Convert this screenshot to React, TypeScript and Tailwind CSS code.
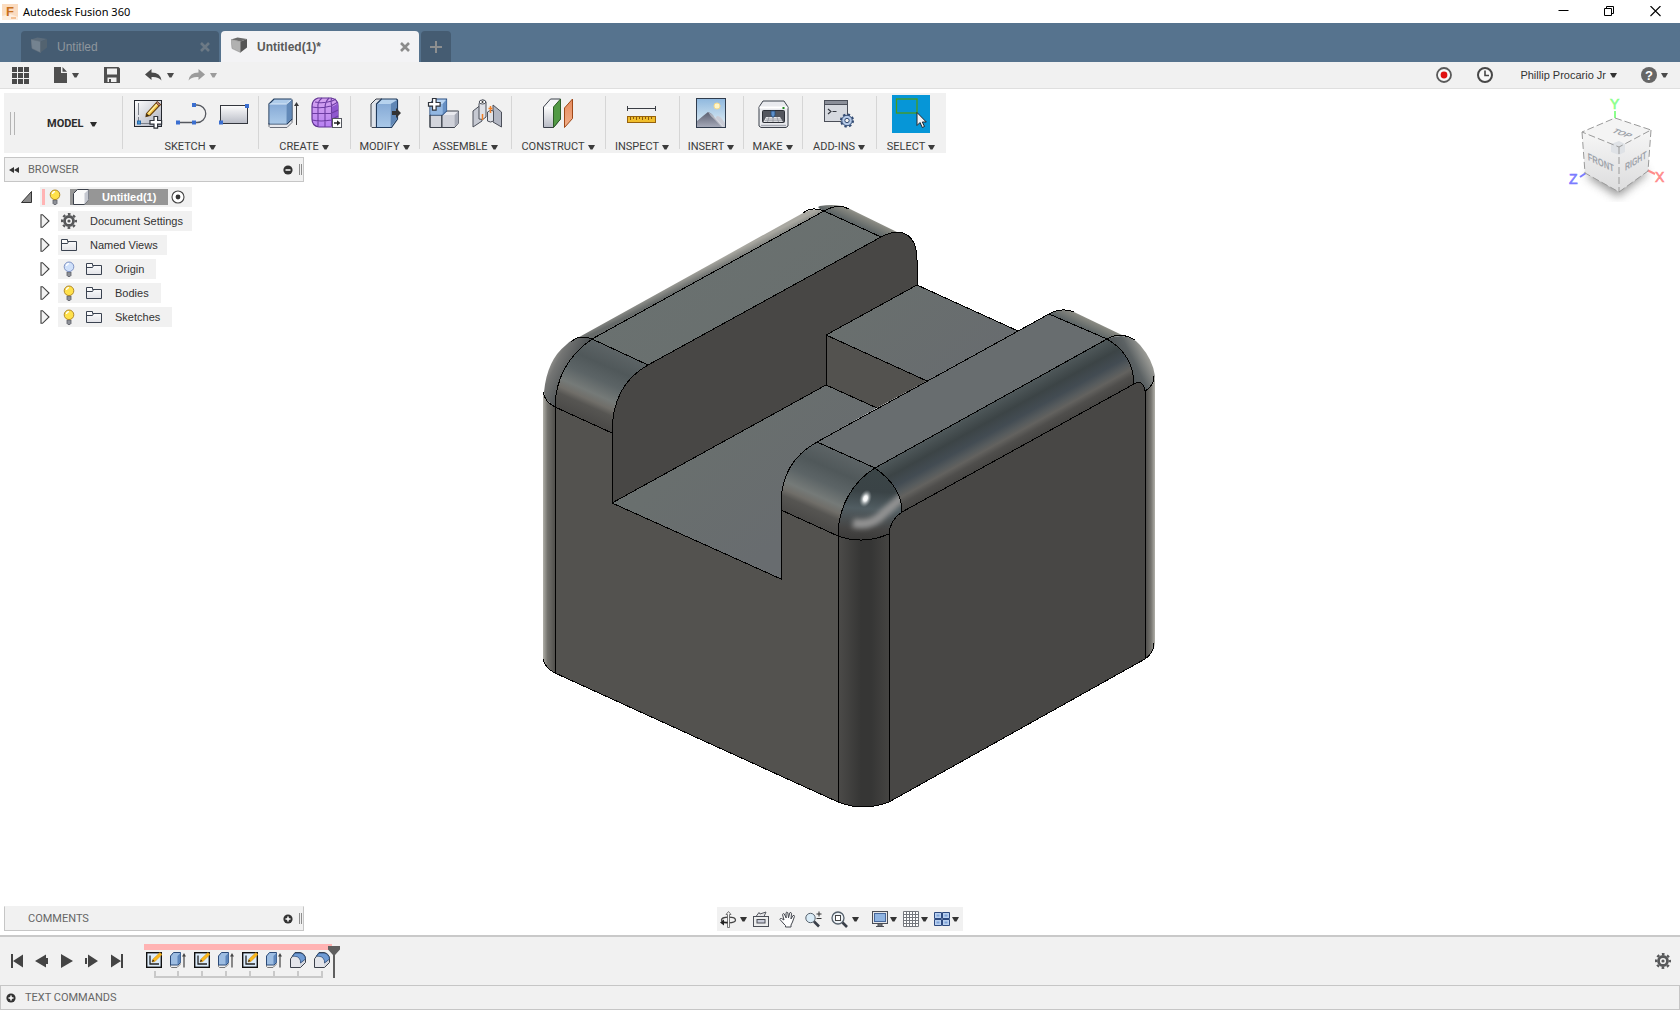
import React from "react";
import clsx from "clsx";

type IconProps = { className?: string };

const Caret = ({ className }: IconProps) => (
    <svg viewBox="0 0 7 5" className={clsx("h-[5px] w-[7px] shrink-0", className)} fill="currentColor">
        <path d="M0 0h7L4.5 4.5h-2z" />
    </svg>
);

const Svg = ({ size = 38, className, children }: { size?: number; className?: string; children: React.ReactNode }) => (
    <svg width={size} height={size} viewBox={`0 0 ${size} ${size}`} className={clsx("shrink-0", className)} fill="none">
        {children}
    </svg>
);

/* ---------- shared gradients ---------- */

const Defs = () => (
    <svg className="absolute h-0 w-0" aria-hidden="true">
        <defs>
            <linearGradient id="gray" x1="0" y1="0" x2="0" y2="1">
                <stop offset="0" stopColor="#fdfdfd" />
                <stop offset="1" stopColor="#b9bcc6" />
            </linearGradient>
            <linearGradient id="paper" x1="0" y1="0" x2="0" y2="1">
                <stop offset="0" stopColor="#ffffff" />
                <stop offset="1" stopColor="#e2e3e8" />
            </linearGradient>
            <linearGradient id="grayDiag" x1="0" y1="0" x2="1" y2="1">
                <stop offset="0" stopColor="#ffffff" />
                <stop offset="1" stopColor="#a9adba" />
            </linearGradient>
            <linearGradient id="blue" x1="0" y1="0" x2="0" y2="1">
                <stop offset="0" stopColor="#86aad6" />
                <stop offset="1" stopColor="#a9c8e8" />
            </linearGradient>
            <linearGradient id="purple" x1="0" y1="0" x2="0" y2="1">
                <stop offset="0" stopColor="#d6a5f0" />
                <stop offset="1" stopColor="#b781f2" />
            </linearGradient>
            <linearGradient id="sky" x1="0" y1="0" x2="0" y2="1">
                <stop offset="0" stopColor="#8fb8de" />
                <stop offset="1" stopColor="#e4f1f6" />
            </linearGradient>
            <linearGradient id="mount" x1="0" y1="0" x2="0" y2="1">
                <stop offset="0" stopColor="#5b5f70" />
                <stop offset="1" stopColor="#a5a9b8" />
            </linearGradient>
            <linearGradient id="orange" x1="0" y1="0" x2="0" y2="1">
                <stop offset="0" stopColor="#e58a5d" />
                <stop offset="1" stopColor="#f2b08a" />
            </linearGradient>
        </defs>
    </svg>
);

/* ---------- ribbon icons ---------- */

const PlusBadge = ({ x, y }: { x: number; y: number }) => (
    <path
        transform={`translate(${x} ${y})`}
        d="M4 0h3.6v4h4v3.6h-4v4H4v-4H0V4h4z"
        fill="#fff"
        stroke="#2f333b"
        strokeWidth="1.2"
    />
);

const SketchIcon = () => (
    <Svg>
        <rect x="6.5" y="5.5" width="27" height="26" fill="url(#grayDiag)" stroke="#24272e" />
        <path d="M10.5 8v19M12 28.5h12" stroke="#7b8089" strokeDasharray="12 2" />
        <rect x="9.5" y="26" width="3" height="3" fill="#4d9ad8" stroke="#2467a8" />
        <path d="M18.5 18.5L29 7l3.500 2.500-10.500 11-4 1z" fill="#f6c445" stroke="#6b4410" strokeWidth="1.1" />
        <path d="M20.5 18.5l10-11" stroke="#fdf0a8" strokeWidth="1.2" />
        <path d="M28 8l3 3 1.500-1.500-3-3z" fill="#b77d67" stroke="#59301d" strokeWidth=".7" />
        <path d="M18.5 18.5l-.5 3 3.500-.8z" fill="#3b2a12" />
        <PlusBadge x={22} y={21.5} />
    </Svg>
);

const LineIcon = () => (
    <Svg>
        <path d="M7 27.5h16M23 10h3a8.700 8.700 0 0 1 0 17.500h-3" stroke="#55585f" strokeWidth="1.3" />
        <path d="M5 25.5h4v4H5zM21 25.5h4v4h-4zM21 8h4v4h-4z" fill="#3b6fd0" />
    </Svg>
);

const RectIcon = () => (
    <Svg>
        <rect x="6.5" y="10.5" width="27" height="18" fill="url(#gray)" stroke="#33363d" />
        <path d="M5 25.5h4v4H5zM31 9h4v4h-4z" fill="#3b6fd0" />
    </Svg>
);

const ExtrudeIcon = () => (
    <Svg>
        <path d="M5 28v3.500l1 1h17l5-5V24z" fill="#e8e9ee" stroke="#6a6e78" />
        <path d="M5 9l5-5h17l1 1v19l-5 5H5z" fill="#aecbea" stroke="#1f3a5c" strokeWidth="1.2" />
        <path d="M5.6 9h17v19.500h-17z" fill="url(#blue)" />
        <path d="M22.5 9v19.500l5-5V5z" fill="#6289b8" />
        <path d="M5.5 9h17l5-4.500" stroke="#d9e8f8" />
        <path d="M32.5 30V9" stroke="#3a3a3a" />
        <path d="M30 11l2.500-4 2.500 4z" fill="#3a3a3a" />
    </Svg>
);

const FormIcon = () => (
    <Svg>
        <path d="M11 3h13q7 1 7 8v11q0 6-6 10H12q-7-1-7-8V11q0-6 6-8z" fill="url(#purple)" stroke="#5f3391" strokeWidth="1.2" />
        <path d="M24 12q6-2 7-5v15q0 6-6 10z" fill="#8e57ce" />
        <path
            d="M5 12q9 2 19-1l7-4M5 18.5h19l7-3.500M5 25q9 2 19 0l7-4M11 13v18M18 13v19M24.5 11v20M8 7q8 2 17-1l4-2M11 13q-1-6 4-10M18 13q0-6 4-10M25 11q-2-5 0-8"
            stroke="#6d3da3"
            strokeWidth="1.1"
        />
        <rect x="25.5" y="23.5" width="9" height="9" fill="#fff" stroke="#54575e" />
        <path d="M27 28h4" stroke="#222" strokeWidth="1.5" />
        <path d="M30 25.2l3.500 2.800-3.500 2.800z" fill="#222" />
    </Svg>
);

const ModifyIcon = () => (
    <Svg>
        <path d="M5 9l5-5h6l-5 5v23.500H6l-1-1z" fill="#dfe3ea" stroke="#3b404a" />
        <path d="M10.5 9l5-5h15l1 1v19l-6 8.500h-15z" fill="#b6d2ee" stroke="#1f3a5c" strokeWidth="1.2" />
        <path d="M11 9h13v23H11z" fill="url(#blue)" />
        <path d="M24.5 9v23l6.500-8V5z" fill="#5f86b5" />
        <path d="M26 16h4v-3l5 5-5 5v-3h-4z" fill="#333" />
    </Svg>
);

const AssembleIcon = () => (
    <Svg>
        <path d="M5 20l4-4M5 20v12.500h12V20z" fill="#d3d5dc" stroke="#3b404a" />
        <path d="M17 20l4-4h12.500v12l-4 4.500H17z" fill="#e8e9ee" stroke="#3b404a" />
        <path d="M17 20h12.500v12H17z" fill="#d0d2da" />
        <path d="M29.5 20v12l4-4V16z" fill="#a6aab6" />
        <path d="M5 9l4-5h12.500v12l-4 4H5z" fill="#b9d5f3" stroke="#2b5184" strokeWidth="1.2" />
        <path d="M5.5 9h12v10.500h-12z" fill="#92b7e2" />
        <path d="M17.5 9v10.500l4-4V4.500z" fill="#6690c4" />
        <path d="M5 20v12.500h24.500M17 20v12.500" stroke="#3b404a" />
        <PlusBadge x={3.5} y={3.5} />
    </Svg>
);

const JointIcon = () => (
    <Svg>
        <path d="M5 16l9-7v17l-9 6z" fill="#c6c9d2" stroke="#4b4f59" />
        <path d="M11 9q0-3 3.500-4 3 0 3.500 2v15q-3 4-7 2z" fill="#dfe1e7" stroke="#4b4f59" />
        <ellipse cx="14.5" cy="7" rx="3.3" ry="2" fill="#fff" stroke="#4b4f59" />
        <circle cx="14.5" cy="7" r="1" fill="#333" />
        <path d="M14.5 19v6" stroke="#f08028" strokeWidth="1.5" />
        <path d="M25 10l8.500 7v15l-8.500-5z" fill="#b3b7c3" stroke="#4b4f59" />
        <path d="M19.5 17q3-3 6-1v10q-3 2-6 0z" fill="#dfe1e7" stroke="#4b4f59" />
        <path d="M22.5 11v7M20.5 13.5h4" stroke="#f08028" strokeWidth="1.5" />
    </Svg>
);

const ConstructIcon = () => (
    <Svg>
        <path d="M4.5 12l7-8h10v20l-7 8.500h-10z" fill="#f4f5f7" stroke="#3b404a" />
        <path d="M5 12h9.500v20H5z" fill="url(#gray)" />
        <path d="M14.5 12l7-8v20l-7 8.500z" fill="#529a45" stroke="#2d5d26" />
        <path d="M25.5 13l8-9v19.500l-8 9z" fill="url(#orange)" stroke="#a04818" />
    </Svg>
);

const InspectIcon = () => (
    <Svg>
        <path d="M4.5 11v5M32.5 11v5M5 13.5h27" stroke="#3a3d44" />
        <rect x="4.5" y="21.5" width="28" height="6" fill="#f0be2c" stroke="#97620c" />
        <path d="M7.5 22v3M10.5 22v2M13.5 22v3M16.5 22v2M19.5 22v3M22.5 22v2M25.5 22v3M28.5 22v2" stroke="#8a5a0a" />
    </Svg>
);

const InsertIcon = () => (
    <Svg>
        <rect x="4.5" y="3.5" width="29" height="29" fill="url(#sky)" />
        <circle cx="25" cy="11" r="3" fill="#fff6c8" stroke="#f6d98a" />
        <path d="M16 32l9-11q3-1 8 7v4z" fill="#c9ccd6" />
        <path d="M5 26l6-5 5-4q4 1 7 6l8 9H5z" fill="url(#mount)" />
        <path d="M16 17q2 4 7 8l7 7h2L22 21q-3-3-6-4z" fill="#e8e9ef" opacity=".55" />
        <rect x="4.5" y="3.5" width="29" height="29" stroke="#2f3b4c" />
    </Svg>
);

const MakeIcon = () => (
    <Svg>
        <path d="M5 12l4-6h21l4 6v19l-2 1.500H7L5 31z" fill="#e9eaee" stroke="#3b404a" />
        <path d="M5.5 12.5h28" stroke="#fff" strokeWidth="2" />
        <rect x="8.5" y="15.5" width="22" height="12" rx="1" fill="#53565e" stroke="#2c2f36" />
        <path d="M12 22h14l3 5H9.5z" fill="#e6e7ea" />
        <path d="M12 24h15M11 25.7h17M15 22l-1.500 5M19 22v5M23 22l1.500 5" stroke="#8b8e97" strokeWidth=".7" />
        <path d="M17 16h4v4l-1 2h-2l-1-2z" fill="#5d90cb" stroke="#274b78" strokeWidth=".8" />
        <rect x="28.5" y="12" width="2" height="2" fill="#1f8a1f" />
        <path d="M7 30.5h25" stroke="#a6a9b3" strokeWidth="1.5" />
    </Svg>
);

const AddInsIcon = () => (
    <Svg>
        <rect x="4.5" y="5.5" width="23" height="21" fill="#d6d9df" stroke="#4a4e58" />
        <rect x="5" y="6" width="22" height="3.5" fill="#8b8f99" />
        <path d="M4.5 9.5h23" stroke="#4a4e58" />
        <path d="M8 14l3 2.500L8 19M12.5 16.5h4" stroke="#33363d" strokeWidth="1.1" />
        <circle cx="27" cy="25.5" r="5.8" fill="#a8bfe0" stroke="#334b72" strokeWidth="2.5" strokeDasharray="2.3 2.25" />
        <circle cx="27" cy="25.5" r="5.2" fill="#b7cbe8" stroke="#334b72" strokeWidth=".9" />
        <circle cx="27" cy="25.5" r="2.2" fill="#f1f1f1" stroke="#334b72" />
    </Svg>
);

const SelectIcon = () => (
    <Svg className="bg-[#0696d7]">
        <rect x="4.5" y="4" width="20.5" height="14" stroke="#4a9a1c" strokeWidth="1.3" />
        <path d="M25 17.5v13l3-3 2.300 5 2.200-1-2.200-4.500h4z" fill="#f1f2f5" stroke="#20262e" />
    </Svg>
);

/* ---------- small icons ---------- */

const Gear = ({ className }: IconProps) => (
    <svg viewBox="0 0 16 16" className={clsx("h-4 w-4 shrink-0", className)} fill="none" stroke="#57585a">
        <circle cx="8" cy="8" r="4.5" strokeWidth="2.8" />
        <circle cx="8" cy="8" r="6.9" strokeWidth="2.2" strokeDasharray="2.7 2.719" strokeDashoffset="1.35" />
        <circle cx="8" cy="8" r="1.6" fill="#57585a" stroke="none" />
    </svg>
);

const Bulb = ({ off }: { off?: boolean }) => (
    <svg viewBox="0 0 12 16" className="h-4 w-3 shrink-0" fill="none">
        <path d="M4 11h4v3.500l-1 1H5l-1-1z" fill="#8d9097" stroke="#5a5d66" strokeWidth=".8" />
        <circle cx="6" cy="5.800" r="4.8" fill={off ? "#cfe0fa" : "#ffe14a"} stroke={off ? "#7f93c4" : "#b1892a"} />
        <path d="M3.5 5a2.500 2.500 0 0 1 2.500-2.300" stroke="#fff" strokeWidth="1.3" />
    </svg>
);

const Folder = () => (
    <svg viewBox="0 0 16 14" className="h-[14px] w-4 shrink-0" fill="none">
        <path d="M.5 12.5v-11h6v2h9v9z" fill="url(#paper)" stroke="#3a4250" />
        <path d="M1 5.5h5.500l1-2" stroke="#3a4250" />
    </svg>
);

const Expander = () => (
    <svg viewBox="0 0 10 14" className="h-[14px] w-[10px]" fill="#f2f2f2" stroke="#3f3f3f" strokeWidth="1.1">
        <path d="M1 .7h1.500L9 7l-6.500 6.300H1z" />
    </svg>
);

const CircleSign = ({ plus }: { plus?: boolean }) => (
    <svg viewBox="0 0 10 10" className="h-[10px] w-[10px] shrink-0">
        <circle cx="5" cy="5" r="4.6" fill="#333" />
        <path d={plus ? "M2.5 5h5M5 2.5v5" : "M2.5 5h5"} stroke="#fff" strokeWidth="1.5" />
    </svg>
);

const TabCube = ({ dim }: { dim?: boolean }) => (
    <svg viewBox="0 0 16 16" className="h-4 w-4 shrink-0">
        <g opacity={dim ? 0.55 : 1}>
            <path d="M0 2.5l6.500-2L16 2 9.5 4.5z" fill={dim ? "#6f7a83" : "#6a6a6a"} />
            <path d="M0 2.5l9.500 2v11L1 11.5z" fill={dim ? "#9ba3a9" : "#b1b1b1"} stroke="#8a8a8a" strokeWidth=".5" />
            <path d="M9.5 4.5L16 2v8.500l-6.500 5z" fill={dim ? "#5f6970" : "#555"} />
        </g>
    </svg>
);

const TabClose = () => (
    <svg viewBox="0 0 10 10" className="h-[10px] w-[10px]" stroke="currentColor" strokeWidth="2.6">
        <path d="M1 1l8 8M9 1L1 9" />
    </svg>
);

/* ---------- title bar, tabs and quick access ---------- */

const TitleBar = () => (
    <header className="flex h-[23px] shrink-0 items-center bg-white pr-[2px] pl-[2px]">
        <svg viewBox="0 0 16 16" className="h-4 w-4">
            <rect width="16" height="16" fill="#fbdcc0" />
            <path d="M0 12l8-2 8 3v3H0z" fill="#fdeee0" />
            <text x="4" y="12" fontSize="13" fontWeight="700" fill="#c9701c" fontFamily="Liberation Sans, sans-serif">F</text>
            <path d="M9 14h5" stroke="#f0b27c" strokeWidth="1.5" />
        </svg>
        <h1 className="ml-[5px] flex-1 font-['Noto_Sans',sans-serif] text-[11px] leading-4 text-black">Autodesk Fusion 360</h1>
        <button aria-label="Minimize" className="flex h-[23px] w-[46px] items-center justify-center">
            <Svg size={11}><path d="M.5 4.500h10" stroke="#000" /></Svg>
        </button>
        <button aria-label="Restore" className="flex h-[23px] w-[46px] items-center justify-center">
            <Svg size={11}><path d="M.5 2.5h7v7h-7zM2.5 2.5v-2h7v7h-2" stroke="#000" /></Svg>
        </button>
        <button aria-label="Close" className="flex h-[23px] w-[46px] items-center justify-center">
            <Svg size={11}><path d="M.5 0l10 10M10.5 0l-10 10" stroke="#000" strokeWidth="1.1" /></Svg>
        </button>
    </header>
);

const Tab = ({ label, active }: { label: string; active?: boolean }) => (
    <div
        className={clsx(
            "flex h-[31px] w-[198px] items-center rounded-t-[4px] pr-[9px] pl-[10px]",
            active ? "bg-[#f3f3f5] text-[#5a5a5a]" : "bg-[#455c72] text-[#8e969d]"
        )}
    >
        <span className="pb-1"><TabCube dim={!active} /></span>
        <button className={clsx("ml-[10px] flex-1 pt-px text-left text-[12px] leading-4", active && "font-bold")}>{label}</button>
        <button aria-label={`Close ${label}`} className={active ? "text-[#8b8b8b]" : "text-[#6c7985]"}>
            <TabClose />
        </button>
    </div>
);

const TabBar = () => (
    <nav className="flex h-[39px] shrink-0 items-end gap-[2px] bg-[#56738e] pl-[21px]">
        <Tab label="Untitled" />
        <Tab label="Untitled(1)*" active />
        <button aria-label="New tab" className="flex h-[31px] w-[30px] items-center justify-center rounded-t-[4px] bg-[#455c72]">
            <Svg size={12}><path d="M0 6h12M6 0v12" stroke="#8d8f90" strokeWidth="2" /></Svg>
        </button>
    </nav>
);

const Arrow = ({ flip }: { flip?: boolean }) => (
    <svg viewBox="0 0 17 12" className={clsx("h-3 w-[17px]", flip && "-scale-x-100")} fill="currentColor">
        <path d="M0 5.5L6.5 0v3.500q9 0 10 8-3-4-10-3.500v3z" />
    </svg>
);

const QuickAccess = () => (
    <div className="flex h-[27px] shrink-0 items-center border-b border-[#dfdfdf] bg-[#f1f1f1] pl-3 text-[#4a4a4a]">
        <button aria-label="Data panel">
            <Svg size={17}>
                <path d="M0 0h5v5H0zM6 0h5v5H6zM12 0h5v5h-5zM0 6h5v5H0zM6 6h5v5H6zM12 6h5v5h-5zM0 12h5v5H0zM6 12h5v5H6zM12 12h5v5h-5z" fill="#4a4a4a" />
            </Svg>
        </button>
        <button aria-label="File" className="ml-[25px] flex items-center gap-[5px]">
            <svg viewBox="0 0 13 16" className="h-4 w-[13px]" fill="#4f4f4f">
                <path d="M0 0h7v6h6v10H0zM8.5 0L13 4.7H8.5z" />
            </svg>
            <Caret />
        </button>
        <button aria-label="Save" className="ml-[25px]">
            <Svg size={16}>
                <path fillRule="evenodd" d="M0 0h14.500L16 1.5V16H0zM3 1.5v6h10v-6zM3.5 10.5V15h9v-4.500z" fill="#4f4f4f" />
                <path d="M5 12h2v3H5z" fill="#4f4f4f" />
            </Svg>
        </button>
        <button aria-label="Undo" className="ml-[25px] flex items-center gap-[5px]">
            <Arrow />
            <Caret />
        </button>
        <button aria-label="Redo" className="ml-[14px] flex items-center gap-[5px] text-[#9b9b9b]">
            <Arrow flip />
            <Caret />
        </button>
        <div className="flex flex-1 items-center justify-end pr-3">
            <button aria-label="Record" className="mr-[25px]">
                <Svg size={16}>
                    <circle cx="8" cy="8" r="7" fill="#f8f8f8" stroke="#5a5a5a" strokeWidth="1.8" />
                    <circle cx="8" cy="8" r="3.4" fill="#e01010" />
                </Svg>
            </button>
            <button aria-label="Job status" className="mr-[27px]">
                <Svg size={16}>
                    <circle cx="8" cy="8" r="7" fill="#f8f8f8" stroke="#474747" strokeWidth="2" />
                    <path d="M8 3.5v5h4" stroke="#474747" strokeWidth="1.6" />
                </Svg>
            </button>
            <button className="mr-6 flex items-center gap-1 text-[11px] leading-4 text-[#333]">
                Phillip Procario Jr <Caret />
            </button>
            <button aria-label="Help" className="flex items-center gap-1">
                <Svg size={16}>
                    <circle cx="8" cy="8" r="8" fill="#666" />
                    <text x="8" y="12.5" textAnchor="middle" fontSize="13" fontWeight="700" fill="#fff" fontFamily="Liberation Sans, sans-serif">?</text>
                </Svg>
                <Caret />
            </button>
        </div>
    </div>
);

/* ---------- ribbon ---------- */

const groups = [
    { label: "SKETCH", width: "w-[136px]", icons: [SketchIcon, LineIcon, RectIcon] },
    { label: "CREATE", width: "w-[92px]", icons: [ExtrudeIcon, FormIcon] },
    { label: "MODIFY", width: "w-[69px]", icons: [ModifyIcon] },
    { label: "ASSEMBLE", width: "w-[92px]", icons: [AssembleIcon, JointIcon] },
    { label: "CONSTRUCT", width: "w-[94px]", icons: [ConstructIcon] },
    { label: "INSPECT", width: "w-[74px]", icons: [InspectIcon] },
    { label: "INSERT", width: "w-[64px]", icons: [InsertIcon] },
    { label: "MAKE", width: "w-[59px]", icons: [MakeIcon] },
    { label: "ADD-INS", width: "w-[74px]", icons: [AddInsIcon] },
    { label: "SELECT", width: "w-[70px]", icons: [SelectIcon] },
];

const Ribbon = () => (
    <div className="flex h-[60px] w-fit bg-[#f1f1f1] font-['Roboto',sans-serif] text-[11px] leading-[14px] text-[#3c3c3c]">
        <div className="flex w-[118px] items-center pl-[6px]">
            <span className="h-[23px] w-[5px] border-x border-[#b4b4b4]" />
            <button className="mt-[2px] ml-8 flex items-center gap-[6px] font-bold text-[#2c2c2c]">
                MODEL <Caret />
            </button>
        </div>
        {groups.map(({ label, width, icons }) => (
            <div key={label} className={clsx("flex", width)}>
                <span className="mt-[3px] h-[53px] w-px shrink-0 bg-[#d6d6d6]" />
                <div className="flex flex-1 flex-col items-center pt-[2px]">
                    <div className="-ml-px flex gap-[5px]">
                        {icons.map((Icon, i) => (
                            <button key={i} aria-label={`${label} ${i + 1}`}>
                                <Icon />
                            </button>
                        ))}
                    </div>
                    <button className="mt-[7px] -ml-px flex items-center gap-[3px]">
                        {label} <Caret />
                    </button>
                </div>
            </div>
        ))}
    </div>
);

/* ---------- browser ---------- */

const PanelBar = ({ title, plus }: { title: string; plus?: boolean }) => (
    <div
        className={clsx(
            "flex h-[25px] w-[300px] items-center border border-[#c6c6c6] bg-[#f1f1f1] pr-px pl-1 font-['Roboto',sans-serif] text-[11px] leading-4 text-[#666]",
            plus && "border-t-transparent"
        )}
    >
        <span className="w-[19px]">
            {!plus && <Svg size={10}><path d="M5 2v6L0 5zM10 2v6L5 5z" fill="#333" /></Svg>}
        </span>
        <h2 className="flex-1">{title}</h2>
        <button aria-label={plus ? "Expand" : "Collapse"}><CircleSign plus={plus} /></button>
        <span className="ml-[6px] h-[11px] w-[3px] border-x border-[#8d8d8d]" />
    </div>
);

const nodes = [
    { label: "Document Settings", icons: [<Gear key="g" />] },
    { label: "Named Views", icons: [<Folder key="f" />] },
    { label: "Origin", icons: [<Bulb key="b" off />, <Folder key="f" />] },
    { label: "Bodies", icons: [<Bulb key="b" />, <Folder key="f" />] },
    { label: "Sketches", icons: [<Bulb key="b" />, <Folder key="f" />] },
];

const Browser = () => (
    <section className="mt-1">
        <PanelBar title="BROWSER" />
        <ul className="mt-[5px] flex flex-col gap-1 text-[11px] leading-4 text-[#333]">
            <li className="flex h-5 items-center pl-[17px]">
                <button aria-label="Collapse Untitled(1)">
                    <Svg size={12}><path d="M10.500.5v11H.5z" fill="#8a8a8a" stroke="#333" /></Svg>
                </button>
                <div className="ml-[7px] flex h-5 items-center bg-[#f1f1f1] pr-[7px] pl-[2px]">
                    <span className="mr-1 h-4 w-[3px] bg-[#ffb3b3]" />
                    <Bulb />
                    <span className="ml-[9px] flex h-4 w-[98px] items-center bg-[#969696] pl-[3px] font-bold text-white">
                        <svg viewBox="0 0 16 16" className="mr-[13px] h-4 w-4 shrink-0">
                            <path d="M.5 4.500l4-4h11v10l-4 5h-11z" fill="#fafafa" stroke="#3b404a" />
                            <path d="M11.5 4.500v11l4-5V.5z" fill="#c5c8d0" />
                        </svg>
                        Untitled(1)
                    </span>
                    <button aria-label="Activate component" className="ml-[3px]">
                        <Svg size={14}>
                            <circle cx="7" cy="7" r="6" fill="#fff" stroke="#444" strokeWidth="1.1" />
                            <circle cx="7" cy="7" r="2.4" fill="#333" />
                        </Svg>
                    </button>
                </div>
            </li>
            {nodes.map(({ label, icons }) => (
                <li key={label} className="flex h-5 items-center pl-9">
                    <button aria-label={`Expand ${label}`}><Expander /></button>
                    <div className={clsx("ml-2 flex h-5 items-center bg-[#f1f1f1]", icons.length > 1 ? "pr-3 pl-[5px]" : "pr-[9px] pl-[3px]")}>
                        <div className="mr-[13px] flex items-center gap-[11px]">{icons}</div>
                        {label}
                    </div>
                </li>
            ))}
        </ul>
    </section>
);

/* ---------- view cube ---------- */

const ViewCube = () => (
    <svg viewBox="1565 93 109 120" className="h-[120px] w-[109px]" fill="none" fontFamily="Liberation Sans, sans-serif">
        <defs>
            <filter id="soft"><feGaussianBlur stdDeviation="5" /></filter>
            <linearGradient id="cubeFace" x1="0" y1="0" x2="0" y2="1">
                <stop offset="0" stopColor="#f6f6f6" />
                <stop offset="1" stopColor="#dcdcdd" />
            </linearGradient>
        </defs>
        <path d="M1586 176l32 21 30-24-30-20z" fill="#777" opacity=".75" filter="url(#soft)" />
        <path d="M1615 118v-7" stroke="#8bff8b" strokeWidth="2" />
        <path d="M1586 173l-6 4" stroke="#7b7bff" strokeWidth="2" />
        <path d="M1647 170l8 4" stroke="#ff8b8b" strokeWidth="2" />
        <path d="M1615 118l36 12-32 17-37-15z" fill="#f4f4f4" />
        <path d="M1582 132l37 15v45l-34-19z" fill="url(#cubeFace)" />
        <path d="M1619 147l32-17-3 41-29 21z" fill="url(#cubeFace)" />
        <path d="M1611 144l8-3 6 3v8l-6 3-8-3z" fill="#dfe2e6" />
        <path d="M1615 118l36 12-32 17-37-15zM1582 132l3 41 34 19 29-21 3-41M1619 147v45" stroke="#9a9a9a" strokeDasharray="7 3" />
        <g fontWeight="700" fill="#9ea3aa">
            <text transform="matrix(.72 .34 .06 1 1588 160)" fontSize="10.500">FRONT</text>
            <text transform="matrix(.66 -.4 0 1 1625 171)" fontSize="10.500">RIGHT</text>
            <text transform="matrix(.85 .3 -.75 .5 1611 132)" fontSize="10">TOP</text>
        </g>
        <g fontSize="14">
            <text x="1610" y="109" fill="#8bff8b" stroke="#8bff8b" strokeWidth=".6">Y</text>
            <text x="1569" y="184" fill="#7b7bff" stroke="#7b7bff" strokeWidth=".6">Z</text>
            <text x="1655" y="182" fill="#ff8b8b" stroke="#ff8b8b" strokeWidth=".6">X</text>
        </g>
    </svg>
);

/* ---------- model ---------- */

const Model = () => (
    <svg viewBox="0 89 1680 846" className="absolute inset-0 h-full w-full" role="img" aria-label="3D model">
        <defs>
            <linearGradient id="top1" gradientUnits="userSpaceOnUse" x1="650" y1="250" x2="850" y2="480">
                <stop offset="0" stopColor="#6a7170" />
                <stop offset=".6" stopColor="#696f6e" />
                <stop offset="1" stopColor="#686c6f" />
            </linearGradient>
            <linearGradient id="fold" gradientUnits="userSpaceOnUse" x1="875" y1="468" x2="900" y2="513">
                <stop offset="0" stopColor="#4f585a" />
                <stop offset=".28" stopColor="#3c4446" />
                <stop offset=".5" stopColor="#434c53" />
                <stop offset=".64" stopColor="#565b5d" />
                <stop offset=".74" stopColor="#63625f" />
                <stop offset=".86" stopColor="#4f4e4c" />
                <stop offset="1" stopColor="#474644" />
            </linearGradient>
            <linearGradient id="lipR" gradientUnits="userSpaceOnUse" x1="817" y1="442" x2="786" y2="512">
                <stop offset="0" stopColor="#5d6466" />
                <stop offset=".25" stopColor="#50585a" />
                <stop offset=".45" stopColor="#5c6466" />
                <stop offset=".64" stopColor="#757a78" />
                <stop offset=".74" stopColor="#706e69" />
                <stop offset=".82" stopColor="#565552" />
                <stop offset="1" stopColor="#4b4a48" />
            </linearGradient>
            <linearGradient id="lipL" href="#lipR" gradientTransform="translate(-225 -103)" />
            <linearGradient id="pillar" gradientUnits="userSpaceOnUse" x1="838" y1="0" x2="889" y2="0">
                <stop offset="0" stopColor="#4c4b49" />
                <stop offset=".45" stopColor="#363635" />
                <stop offset=".65" stopColor="#363635" />
                <stop offset="1" stopColor="#454442" />
            </linearGradient>
            <linearGradient id="edgeL" gradientUnits="userSpaceOnUse" x1="543" y1="0" x2="556" y2="0">
                <stop offset="0" stopColor="#b0afa8" />
                <stop offset=".35" stopColor="#73726d" />
                <stop offset="1" stopColor="#4c4b48" />
            </linearGradient>
            <linearGradient id="edgeR" gradientUnits="userSpaceOnUse" x1="1145" y1="0" x2="1155" y2="0">
                <stop offset="0" stopColor="#4a4947" />
                <stop offset=".6" stopColor="#75746f" />
                <stop offset="1" stopColor="#b0afa8" />
            </linearGradient>
            <linearGradient id="rim" gradientUnits="userSpaceOnUse" x1="700" y1="280" x2="695.5" y2="271">
                <stop offset="0" stopColor="#666a69" />
                <stop offset="1" stopColor="#a9a8a1" />
            </linearGradient>
            <linearGradient id="rimB" gradientUnits="userSpaceOnUse" x1="852" y1="224" x2="860" y2="207">
                <stop offset="0" stopColor="#596163" />
                <stop offset=".55" stopColor="#85867f" />
                <stop offset="1" stopColor="#b7b6ad" />
            </linearGradient>
            <linearGradient id="rimC" href="#rimB" gradientTransform="translate(226 103)" />
            <linearGradient id="ballL" gradientUnits="userSpaceOnUse" x1="546" y1="360" x2="574" y2="374">
                <stop offset="0" stopColor="#aaa9a3" />
                <stop offset=".35" stopColor="#747574" />
                <stop offset="1" stopColor="#4b5052" />
            </linearGradient>
            <linearGradient id="ballR" gradientUnits="userSpaceOnUse" x1="1119" y1="372" x2="1151" y2="356">
                <stop offset="0" stopColor="#464b4d" />
                <stop offset=".5" stopColor="#5c6264" />
                <stop offset="1" stopColor="#a9a8a1" />
            </linearGradient>
            <linearGradient id="ball" gradientUnits="userSpaceOnUse" x1="866" y1="470" x2="862" y2="540">
                <stop offset="0" stopColor="#3b4547" />
                <stop offset=".3" stopColor="#3a4346" />
                <stop offset=".55" stopColor="#515d62" />
                <stop offset=".85" stopColor="#454443" />
                <stop offset="1" stopColor="#3b3a39" />
            </linearGradient>
            <radialGradient id="spark">
                <stop offset="0" stopColor="#fff" />
                <stop offset=".3" stopColor="#f4f6f6" />
                <stop offset="1" stopColor="#8a9497" stopOpacity="0" />
            </radialGradient>
            <filter id="haze" x="-50%" y="-50%" width="200%" height="200%"><feGaussianBlur stdDeviation="2.5" /></filter>
            <clipPath id="ballClip">
                <path d="M875 468C852 482 838 508 838 536Q863 545 889 534Q890 520 902 512Q902 487 875 468z" />
            </clipPath>
        </defs>

        {/* surfaces */}
        <path d="M592 339L824 211Q812 207 803 213L572 341z" fill="url(#rim)" />
        <path d="M824 211Q815 207 820 206Q838 203 850 209L897 232L881 237z" fill="url(#rimB)" />
        <path d="M592 339Q578 333 566 345Q547 360 544 392L545 399L555 407Q556 364 592 339z" fill="url(#ballL)" />
        <path d="M543 392Q545 402 555 407V673Q545 668 543 659z" fill="url(#edgeL)" />
        <path d="M824 211L881 237L648 365L592 339z" fill="url(#top1)" />
        <path d="M592 339L648 365Q612 385 612 433L555 407Q556 364 592 339z" fill="url(#lipL)" />
        <path d="M648 365L881 237C903 225 917 236 917 260V285L826 335V385L612 503V433Q612 385 648 365" fill="#484745" />
        <path d="M917 285L1018 331L927 381L826 335z" fill="url(#top1)" />
        <path d="M826 335L927 381L877 408L826 385z" fill="#53524f" />
        <path d="M612 503L826 385L877 408L817 442Q781 462 781 504V579z" fill="url(#top1)" />
        <path d="M555 407L612 433V503L781 579V510L838 536V802L555 673z" fill="#53524f" />
        <path d="M1049 314Q1062 307 1074 312L1122 335L1107 339z" fill="url(#rimC)" />
        <path d="M1107 339Q1128 331 1140 345Q1153 360 1155 376Q1154 386 1145 391Q1143 379 1134 384Q1133 354 1107 339z" fill="url(#ballR)" />
        <path d="M1155 376Q1154 386 1145 391V659Q1154 653 1155 643z" fill="url(#edgeR)" />
        <path d="M817 442L1049 314L1107 339L875 468z" fill="#686d6f" />
        <path d="M817 442L875 468C852 482 838 508 838 536L781 510V504Q781 462 817 442z" fill="url(#lipR)" />
        <path d="M875 468L1107 339Q1133 354 1134 384L902 512Q902 487 875 468z" fill="url(#fold)" />
        <path d="M902 512L1134 384Q1143 379 1145 391V659L889 802V534Q890 520 902 512z" fill="#484745" />
        <path d="M838 536Q863 545 889 534V802Q863 812 838 802z" fill="url(#pillar)" />
        <g clipPath="url(#ballClip)">
            <path d="M835 460h75v90h-75z" fill="url(#ball)" />
            <path d="M853 523Q872 527 884 513L904 496" stroke="#929292" strokeWidth="9" fill="none" filter="url(#haze)" />
            <ellipse cx="865.5" cy="498.5" rx="6" ry="9" fill="url(#spark)" transform="rotate(20 865.5 498.5)" />
        </g>

        {/* edges */}
        <g fill="none" stroke="#000" strokeWidth="1" shapeRendering="crispEdges">
            <path d="M803 213Q812 206 824 211L881 237M824 211Q838 203 849 209M824 211L592 339L648 365L881 237C903 225 917 236 917 260V285L826 335V385L612 503V433Q612 385 648 365" />
            <path d="M571 342Q579 334 592 339Q556 364 555 407L612 433M543 392Q545 402 555 407V673M543 659Q545 668 555 673L838 802Q863 812 889 802L1145 659Q1154 653 1154 643" />
            <path d="M917 285L1018 331M826 335L927 381M826 385L877 408M612 503L781 579V504Q781 462 817 442L1049 314L1107 339L875 468L817 442" />
            <path d="M781 510L838 536V802M838 536Q863 545 889 534V802M875 468C852 482 838 508 838 536M875 468Q902 487 902 512Q890 520 889 534M902 512L1134 384Q1133 354 1107 339" />
            <path d="M1049 314Q1062 307 1074 312M1107 339Q1120 331 1135 340M1134 384Q1143 379 1145 391V659M1154 376Q1154 386 1145 391" />
        </g>
    </svg>
);

/* ---------- navigation bar ---------- */

const OrbitIcon = () => (
    <Svg size={17}>
        <ellipse cx="8.5" cy="9" rx="7" ry="2.8" stroke="#444" strokeWidth="1.3" />
        <path d="M7.5 16.500V3.500H6l2.500-3 2.500 3H9.500v13z" fill="#f7f7f7" stroke="#555" strokeWidth=".8" />
        <path d="M1.500 11.500h6" stroke="#222" strokeWidth="1.5" />
        <path d="M0 11.500l4-3v6z" fill="#222" />
    </Svg>
);
const LookAtIcon = () => (
    <Svg size={17}>
        <path d="M3 5.5l3-4 1 1.500 6-2-2 4.500" fill="#e5e5e8" stroke="#55585f" />
        <rect x=".5" y="5.5" width="15" height="10" fill="#eceded" stroke="#4b4e56" />
        <rect x="4" y="8.5" width="8" height="3.5" fill="#c9ccd9" stroke="#4b4e56" />
    </Svg>
);
const PanIcon = () => (
    <Svg size={17}>
        <path d="M5 13L1 8.5q0-1.500 1.500-1L5 9 3.5 3.500q.5-1.500 1.800-.5L7.200 7 7 1.800q.8-1.500 1.800 0l.7 5 1.300-5q1.200-1 1.700.5L12 8l2-3.500q1.500-.5 1.500.8L13.500 11l-1.500 3v2H6.500v-1.500z" fill="#fff" stroke="#44474e" />
    </Svg>
);
const ZoomIcon = () => (
    <Svg size={17}>
        <circle cx="5.5" cy="7" r="4.7" fill="#d9ebf6" stroke="#55606b" />
        <path d="M9 10.5l5 5" stroke="#3a3f49" strokeWidth="2.6" />
        <path d="M11.5 3h5M14 .5v5M11.5 7.5h5" stroke="#333" />
    </Svg>
);
const FitIcon = () => (
    <Svg size={17}>
        <circle cx="7" cy="7" r="6" fill="#eef3f7" stroke="#55606b" strokeWidth="1.3" />
        <rect x="4.5" y="4.5" width="5" height="5" fill="#fff" stroke="#444" />
        <path d="M11.5 11.5l4.500 4.500" stroke="#3a3f49" strokeWidth="2.6" />
    </Svg>
);
const DisplayIcon = () => (
    <Svg size={17}>
        <rect x=".5" y=".5" width="15" height="12" fill="#e5e7ea" stroke="#4b4e56" />
        <rect x="2.5" y="2.5" width="11" height="8" fill="#8fb4e2" stroke="#46679a" />
        <path d="M6 13h4v2H6zM4 15.5h8" fill="#999" stroke="#4b4e56" />
    </Svg>
);
const GridIcon = () => (
    <Svg size={17}>
        <path d="M.5.5h15v15H.5z" fill="#fff" />
        <path d="M.5.5h15v15H.5zM3.5.5v15M6.5.5v15M9.5.5v15M12.5.5v15M.5 3.500h15M.5 6.500h15M.5 9.500h15M.5 12.500h15" stroke="#74777d" />
    </Svg>
);
const ViewportsIcon = () => (
    <Svg size={17}>
        <path d="M.5 1.500h7v6h-7zM8.5 1.500h7v6h-7zM.5 8.500h7v6h-7zM8.5 8.500h7v6h-7z" fill="#b9d0f0" stroke="#2d4a80" />
        <path d="M2.5 3.500h3v2h-3zM10.5 3.500h3v2h-3zM2.5 10.500h3v2h-3zM10.5 10.500h3v2h-3z" fill="#7da2d8" />
    </Svg>
);

const NavigationBar = () => (
    <div className="flex h-6 items-center bg-[#f1f1f1] pr-1 pl-[3px] text-[#333]">
        <button aria-label="Orbit" className="flex items-center gap-[3px]"><OrbitIcon /><Caret /></button>
        <button aria-label="Look at" className="ml-[6px]"><LookAtIcon /></button>
        <button aria-label="Pan" className="ml-[9px]"><PanIcon /></button>
        <button aria-label="Zoom" className="ml-[9px]"><ZoomIcon /></button>
        <button aria-label="Fit" className="ml-[9px] flex items-center gap-1"><FitIcon /><Caret /></button>
        <button aria-label="Display settings" className="ml-[13px] flex items-center gap-px"><DisplayIcon /><Caret /></button>
        <button aria-label="Grid and snaps" className="ml-[6px] flex items-center gap-px"><GridIcon /><Caret /></button>
        <button aria-label="Viewports" className="ml-[6px] flex items-center gap-px"><ViewportsIcon /><Caret /></button>
    </div>
);

/* ---------- timeline ---------- */

const SketchFeature = () => (
    <Svg size={16}>
        <rect x=".7" y=".7" width="14.6" height="14.6" fill="#dcecfb" stroke="#111" strokeWidth="1.4" />
        <path d="M4 3.5v8.500h9" stroke="#222" strokeWidth="1.3" />
        <path d="M6 10l1-3 7-6.500 2 2L9 9.5z" fill="#fbb81c" stroke="#c98a20" strokeWidth=".5" />
        <path d="M6 10l.8-2.500L8.5 9z" fill="#3a2a10" />
    </Svg>
);
const ExtrudeFeature = () => (
    <Svg size={16}>
        <path d="M.5 12.500v2l1 1h5.500l3-3v-2" fill="#eee" stroke="#777" />
        <path d="M.5 4l3-3.500h7v10L8 13H.5z" fill="#9dbde2" stroke="#2b4a78" />
        <path d="M7.5 4v9l3-3V1z" fill="#5d86bb" />
        <path d="M14 15.5V3" stroke="#444" strokeWidth="1.2" />
        <path d="M12 4.500L14 1l2 3.500z" fill="#444" />
    </Svg>
);
const FilletFeature = () => (
    <Svg size={16}>
        <path d="M.5 15V7L5 .5h5q5 1 5.500 6v4l-5 5H.5z" fill="#d5d8df" stroke="#3b404a" />
        <path d="M5 1h5q5 1 5.500 6l-5 4q0-6-5-6.500L2.5 4z" fill="#6f9bd4" stroke="#26446f" strokeWidth=".8" />
        <path d="M1 15V7q2-3 5-2 4 1 4 6v4z" fill="#e4e5ea" />
    </Svg>
);

const features = [
    SketchFeature, ExtrudeFeature, SketchFeature, ExtrudeFeature,
    SketchFeature, ExtrudeFeature, FilletFeature, FilletFeature,
];

const playback = [
    { label: "Go to start", d: "M1 1h2v14H1zM13 1.5v13L3 8z" },
    { label: "Step back", d: "M11 1.5v13L0 8zM11 5h2v6h-2z" },
    { label: "Play", d: "M1 1l12 7-12 7z" },
    { label: "Step forward", d: "M3 1.5v13L13 8zM0 5h2v6H0z" },
    { label: "Go to end", d: "M1 1.5v13L11 8zM11 1h2v14h-2z" },
];

const Timeline = () => (
    <footer className="flex h-[50px] shrink-0 items-start border-t-2 border-[#c9c9c9] bg-[#f1f1f1] pr-[9px] pl-[10px]">
        <div className="flex gap-[11px] pt-4">
            {playback.map(({ label, d }) => (
                <button key={label} aria-label={label}>
                    <svg viewBox="0 0 14 16" className="h-4 w-[14px]" fill="#444"><path d={d} /></svg>
                </button>
            ))}
        </div>
        <div className="ml-5 flex flex-1 pt-[7px]">
            <div>
                <div className="h-[6px] bg-[#ffb3b3]" />
                <div className="mt-[2px] flex gap-2 px-[2px]">
                    {features.map((Feature, i) => (
                        <button key={i} aria-label={`Feature ${i + 1}`}><Feature /></button>
                    ))}
                </div>
                <svg viewBox="0 0 188 9" className="mt-[2px] h-[9px] w-[188px]" fill="none" stroke="#c9c9c9" strokeWidth="2">
                    <path d="M11 1v6h167V1M34 1v6M58 1v6M82 1v6M106 1v6M130 1v6M154 1v6" />
                </svg>
            </div>
            <svg viewBox="0 0 12 33" className="mt-[2px] -ml-1 h-[33px] w-3" fill="#5f5f5f">
                <path d="M0 0h12v3.500L7 9v23H5V9L0 3.5z" />
            </svg>
        </div>
        <button aria-label="Timeline settings" className="mt-4"><Gear /></button>
    </footer>
);

const TextCommands = () => (
    <div className="flex h-[25px] shrink-0 items-center gap-[9px] border border-[#c6c6c6] bg-[#f1f1f1] pl-[5px] font-['Roboto',sans-serif] text-[11px] leading-4 text-[#666]">
        <button aria-label="Expand text commands"><CircleSign plus /></button>
        <span>TEXT COMMANDS</span>
    </div>
);

export default function App() {
    return (
        <div className="flex h-screen min-h-[640px] flex-col overflow-hidden bg-white font-['Liberation_Sans',Arial,sans-serif]">
            <Defs />
            <TitleBar />
            <TabBar />
            <QuickAccess />
            <main className="relative flex min-h-0 flex-1 flex-col justify-between">
                <Model />
                <div className="relative flex items-start justify-between pt-1 pr-[6px] pl-1">
                    <div>
                        <Ribbon />
                        <Browser />
                    </div>
                    <ViewCube />
                </div>
                <div className="relative grid grid-cols-[1fr_auto_1fr] items-end px-1 pb-1">
                    <PanelBar title="COMMENTS" plus />
                    <NavigationBar />
                </div>
            </main>
            <Timeline />
            <TextCommands />
        </div>
    );
}
